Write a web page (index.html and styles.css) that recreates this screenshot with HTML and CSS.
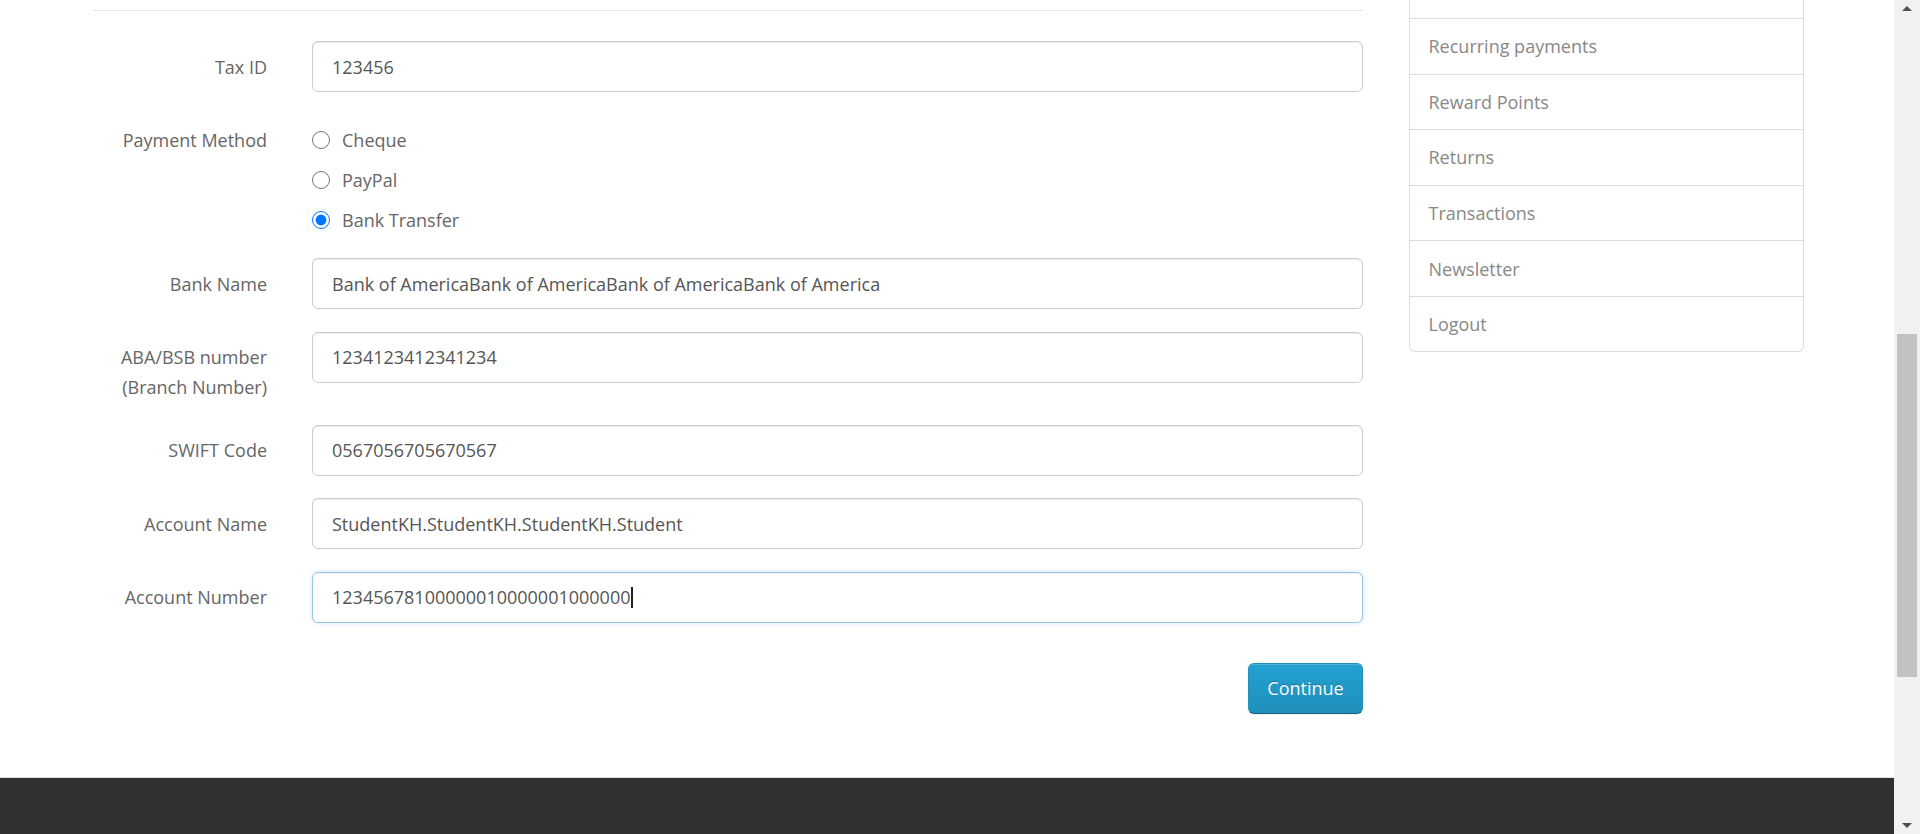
FILE: index.html
```html
<!DOCTYPE html>
<html lang="en">
<head>
<meta charset="utf-8">
<title>Affiliate Information</title>
<link rel="stylesheet" href="styles.css">
</head>
<body>
<div class="page">
  <main class="main">
    <div class="container">
      <section class="content">
        <hr class="divider">
        <form class="form">
          <div class="form-group">
            <label class="control-label" for="tax">Tax ID</label>
            <div class="field"><input class="form-control" id="tax" type="text" value="123456"></div>
          </div>
          <div class="form-group form-group-radios">
            <span class="control-label">Payment Method</span>
            <div class="field radios">
              <label class="radio"><input type="radio" name="payment" value="cheque"> Cheque</label>
              <label class="radio"><input type="radio" name="payment" value="paypal"> PayPal</label>
              <label class="radio"><input type="radio" name="payment" value="bank" checked> Bank Transfer</label>
            </div>
          </div>
          <div class="form-group">
            <label class="control-label" for="bank">Bank Name</label>
            <div class="field"><input class="form-control" id="bank" type="text" value="Bank of AmericaBank of AmericaBank of AmericaBank of America"></div>
          </div>
          <div class="form-group">
            <label class="control-label" for="aba">ABA/BSB number<br>(Branch Number)</label>
            <div class="field"><input class="form-control" id="aba" type="text" value="1234123412341234"></div>
          </div>
          <div class="form-group">
            <label class="control-label" for="swift">SWIFT Code</label>
            <div class="field"><input class="form-control" id="swift" type="text" value="0567056705670567"></div>
          </div>
          <div class="form-group">
            <label class="control-label" for="accname">Account Name</label>
            <div class="field"><input class="form-control" id="accname" type="text" value="StudentKH.StudentKH.StudentKH.Student"></div>
          </div>
          <div class="form-group">
            <span class="control-label">Account Number</span>
            <div class="field">
              <div class="form-control is-focused" role="textbox"><span>12345678100000010000001000000</span><span class="caret"></span></div>
            </div>
          </div>
          <div class="buttons">
            <button type="button" class="btn-primary">Continue</button>
          </div>
        </form>
      </section>
      <aside class="sidebar">
        <div class="list-group">
          <div class="list-stub"></div>
          <a class="list-item" href="#">Recurring payments</a>
          <a class="list-item" href="#">Reward Points</a>
          <a class="list-item" href="#">Returns</a>
          <a class="list-item" href="#">Transactions</a>
          <a class="list-item" href="#">Newsletter</a>
          <a class="list-item" href="#">Logout</a>
        </div>
      </aside>
    </div>
  </main>
  <footer class="footer"></footer>
</div>
<div class="scrollbar" aria-hidden="true">
  <div class="arrow arrow-up"></div>
  <div class="track"><div class="thumb"></div></div>
  <div class="arrow arrow-down"></div>
</div>
</body>
</html>
```

FILE: styles.css
```css
* { box-sizing: border-box; }

html, body {
  margin: 0;
  height: 100%;
  overflow: hidden;
}

body {
  display: flex;
  font-family: "Open Sans", "DejaVu Sans", sans-serif;
  font-size: 18px;
  line-height: 30px;
  color: #666;
  background: #fff;
}

.page {
  flex: 1;
  display: flex;
  flex-direction: column;
  min-width: 0;
}

.main {
  flex: 1;
}

.container {
  display: flex;
  padding-left: 93px;
  gap: 46px;
}

.content {
  width: 1270px;
  padding-top: 10px;
}

.divider {
  margin: 0 0 30px;
  border: 0;
  border-top: 1px solid #e8e8e8;
  height: 0;
}

.form-group {
  display: grid;
  grid-template-columns: 174px 1051px;
  column-gap: 45px;
  margin-bottom: 22.5px;
}

.form-group-radios {
  margin-bottom: 23.5px;
}

.control-label {
  text-align: right;
  padding-top: 10.5px;
  line-height: 30px;
  color: #666;
}

.form-control {
  display: block;
  width: 100%;
  height: 51px;
  padding: 0 19px;
  font-family: inherit;
  font-size: 18px;
  color: #555;
  background: #fff;
  border: 1px solid #ccc;
  border-radius: 6px;
  box-shadow: inset 0 1px 1px rgba(0,0,0,0.075);
  outline: none;
}

.form-control.is-focused {
  display: flex;
  align-items: center;
  border-color: #9cc2e5;
  box-shadow: inset 0 1px 1px rgba(0,0,0,0.05), 0 0 4px rgba(102,175,233,0.35);
}

.caret {
  display: inline-block;
  width: 1.5px;
  height: 21px;
  background: #222;
  margin-left: 1px;
}

.radios {
  display: flex;
  flex-direction: column;
}

.radio {
  display: flex;
  align-items: center;
  gap: 12px;
  padding-top: 10.5px;
  height: 40px;
  line-height: 30px;
  color: #666;
}

.radio input {
  width: 18px;
  height: 18px;
  margin: 0;
  flex: none;
}

.buttons {
  display: flex;
  justify-content: flex-end;
  padding-top: 17.5px;
}

.btn-primary {
  width: 115px;
  height: 51px;
  padding: 0;
  font-family: inherit;
  font-size: 18px;
  color: #fff;
  text-shadow: 0 -1px 0 rgba(0,0,0,0.25);
  background: linear-gradient(#23a1d1, #1f90bb);
  border: 1px solid #1f90bb;
  border-bottom-color: #145e7a;
  border-radius: 6px;
  box-shadow: inset 0 1px 0 rgba(255,255,255,0.2), 0 1px 2px rgba(0,0,0,0.05);
}

.sidebar {
  width: 395px;
}

.list-group {
  border: 1px solid #ddd;
  border-top: 0;
  border-radius: 0 0 6px 6px;
}

.list-stub {
  height: 18px;
}

.list-item {
  display: block;
  border-top: 1px solid #ddd;
  padding: 14.2px 17px 14.4px 18.5px;
  line-height: 26px;
  color: #888;
  text-decoration: none;
}

.footer {
  height: 57px;
  background: #303030;
  border-top: 1px solid #ddd;
}

.scrollbar {
  width: 26px;
  flex: none;
  background: #f1f1f1;
  display: flex;
  flex-direction: column;
  align-items: center;
}

.arrow {
  height: 17px;
  display: flex;
  align-items: center;
  justify-content: center;
}

.arrow-up::before,
.arrow-down::before {
  content: "";
  border-left: 5px solid transparent;
  border-right: 5px solid transparent;
}

.arrow-up::before { border-bottom: 5px solid #505050; }
.arrow-down::before { border-top: 5px solid #505050; }

.track {
  flex: 1;
  width: 100%;
  padding: 317px 3px 0 3px;
}

.thumb {
  height: 343px;
  background: #c1c1c1;
}
```
